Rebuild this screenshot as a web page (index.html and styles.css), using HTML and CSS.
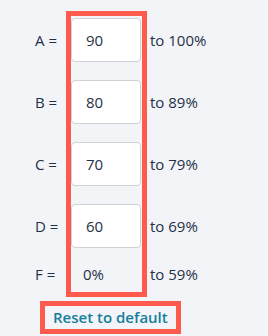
FILE: index.html
```html
<!DOCTYPE html>
<html lang="en">
<head>
	<meta charset="UTF-8">
	<title>Grading scale</title>
	<link rel="stylesheet" href="styles.css">
</head>
<body>
	<div class="scale">
		<label class="letter row1" for="gA">A =</label>
		<input class="cutoff row1" id="gA" type="text" value="90">
		<span class="range row1">to 100%</span>

		<label class="letter row2" for="gB">B =</label>
		<input class="cutoff row2" id="gB" type="text" value="80">
		<span class="range row2">to 89%</span>

		<label class="letter row3" for="gC">C =</label>
		<input class="cutoff row3" id="gC" type="text" value="70">
		<span class="range row3">to 79%</span>

		<label class="letter row4" for="gD">D =</label>
		<input class="cutoff row4" id="gD" type="text" value="60">
		<span class="range row4">to 69%</span>

		<span class="letter row5">F =</span>
		<span class="cutoff fixed row5">0%</span>
		<span class="range row5">to 59%</span>

		<div class="frame"></div>
	</div>
	<a href="javascript:;" class="reset">Reset to default</a>
</body>
</html>
```

FILE: styles.css
```css
* { margin: 0; padding: 0; box-sizing: border-box; }
body { background: #f3f4f8; font-family: "Open Sans", "Noto Sans", sans-serif; font-size: 15px; color: #1f3147; padding: 18px 0 0 35px; }
.scale { display: grid; grid-template-columns: 31px 81px auto; grid-template-rows: repeat(4, 44px) 16px; row-gap: 18px; align-items: center; }
.row1 { grid-row: 1; }
.row2 { grid-row: 2; }
.row3 { grid-row: 3; }
.row4 { grid-row: 4; }
.row5 { grid-row: 5; line-height: 16px; }
.frame { grid-column: 2; grid-row: 1 / -1; align-self: stretch; margin: -7px 0 -15px; border: 5px solid #ff5a4e; pointer-events: none; }
.letter { grid-column: 1; line-height: 20px; }
.cutoff { grid-column: 2; width: 70px; height: 44px; margin-left: 5px; padding-left: 14px; border: 1px solid #cfd3d8; border-radius: 4px; background: #fff; font: inherit; color: inherit; outline: none; }
.range { grid-column: 3; margin-left: 3px; line-height: 20px; }
.fixed { height: 16px; line-height: 16px; border: none; background: none; padding-left: 12px; }
.reset { display: inline-block; margin: 19px 0 0 5px; padding: 0 8px; height: 33px; line-height: 23px; border: 5px solid #ff5a4e; color: #14809a; font-weight: 600; font-size: 15px; text-decoration: none; }
```
